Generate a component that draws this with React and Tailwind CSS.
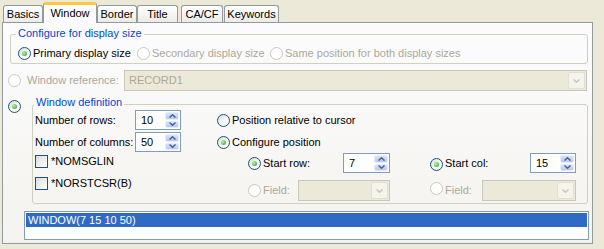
import React from 'react';

const Radio = ({ checked, disabled }) => (
  <span
    className={`inline-flex h-[13px] w-[13px] shrink-0 items-center justify-center rounded-full border ${
      disabled
        ? 'border-[#CAC8BB] bg-white'
        : 'border-[#1C5180] bg-gradient-to-br from-[#DCDBD5] via-[#F6F6F3] to-white'
    }`}
  >
    {checked && (
      <span className="h-[5px] w-[5px] rounded-full bg-[radial-gradient(circle_at_35%_35%,#B8F0B0,#21A121)]" />
    )}
  </span>
);

const Checkbox = () => (
  <span className="inline-block h-[13px] w-[13px] shrink-0 border border-[#1C5180] bg-gradient-to-br from-[#DCDCD7] to-white" />
);

const Arrow = ({ up, color = '#4D6185' }) => (
  <svg width="7" height="4" viewBox="0 0 7 4">
    <path
      d={up ? 'M0.5 3.5 L3.5 0.8 L6.5 3.5' : 'M0.5 0.5 L3.5 3.2 L6.5 0.5'}
      fill="none"
      stroke={color}
      strokeWidth="1.5"
    />
  </svg>
);

const Spinner = ({ value, w }) => (
  <div className={`flex h-[20px] shrink-0 border border-[#7F9DB9] bg-white ${w}`}>
    <span className="flex-1 pl-[5px] leading-[18px]">{value}</span>
    <div className="flex w-[16px] flex-col gap-px p-px">
      <span className="flex flex-1 items-center justify-center rounded-[2px] border border-[#E4ECFD] bg-gradient-to-b from-[#D9E4FD] to-[#B4C8F6]">
        <Arrow up />
      </span>
      <span className="flex flex-1 items-center justify-center rounded-[2px] border border-[#E4ECFD] bg-gradient-to-b from-[#D9E4FD] to-[#B4C8F6]">
        <Arrow />
      </span>
    </div>
  </div>
);

const Combo = ({ text, w }) => (
  <div className={`flex h-[21px] shrink-0 border border-[#C9C7BA] bg-[#ECE9D8] p-px ${w}`}>
    <span className="flex-1 pl-[3px] leading-[17px] text-[#ACA899]">{text}</span>
    <span className="flex w-[17px] items-center justify-center rounded-[2px] border border-[#E2E0D4] bg-[#F4F3EC]">
      <Arrow color="#C9C7BA" />
    </span>
  </div>
);

const Tab = ({ label, w, ml = '' }) => (
  <div
    className={`flex h-[17px] items-center justify-center rounded-t-[3px] border border-b-0 border-[#919B9C] bg-gradient-to-b from-white to-[#ECEBE6] ${w} ${ml}`}
  >
    {label}
  </div>
);

export default function App() {
  return (
    <div className="h-[249px] w-[604px] overflow-hidden bg-[#ECE9D8] font-['Liberation_Sans',Arial,sans-serif] text-[11px] text-black">
      {/* Tabs */}
      <div className="relative z-10 flex h-[22px] items-end pl-[3px]">
        <Tab label="Basics" w="w-[40px]" />
        <div className="-mb-px flex h-[21px] w-[54px] items-center justify-center rounded-t-[3px] border-x border-t-[3px] border-x-[#919B9C] border-t-[#FFC83C] bg-[#FCFCFE] pb-px">
          Window
        </div>
        <Tab label="Border" w="w-[40px]" />
        <Tab label="Title" w="w-[41px]" />
        <Tab label="CA/CF" w="w-[42px]" ml="ml-[3px]" />
        <Tab label="Keywords" w="w-[55px]" ml="ml-[1px]" />
      </div>

      {/* Panel */}
      <div className="ml-[2px] flex h-[222px] w-[591px] flex-col border border-[#919B9C] bg-gradient-to-b from-[#FCFCFE] to-[#F4F3EE]">
        {/* Configure for display size */}
        <div className="relative ml-[7px] mt-[11px] h-[30px] w-[578px] shrink-0 rounded-[3px] border border-[#D0D0BF]">
          <span className="absolute left-[5px] top-[-8px] bg-[#FCFCFD] px-[2px] leading-[13px] text-[#0046D5]">
            Configure for display size
          </span>
          <div className="flex items-center pl-[7px] pt-[10px]">
            <div className="flex w-[119px] items-center">
              <Radio checked />
              <span className="ml-[2px]">Primary display size</span>
            </div>
            <div className="flex w-[133px] items-center text-[#ACA899]">
              <Radio disabled />
              <span className="ml-[2px]">Secondary display size</span>
            </div>
            <div className="flex items-center text-[#ACA899]">
              <Radio disabled />
              <span className="ml-[2px]">Same position for both display sizes</span>
            </div>
          </div>
        </div>

        {/* Window reference */}
        <div className="mt-[6px] flex h-[21px] items-center pl-[5px]">
          <Radio disabled />
          <span className="ml-[6px] w-[97px] text-[#ACA899]">Window reference:</span>
          <Combo text="RECORD1" w="w-[463px]" />
        </div>

        {/* Window definition */}
        <div className="mt-[13px] flex items-start pl-[5px]">
          <div className="mt-[-7px]">
            <Radio checked />
          </div>
          <div className="relative ml-[11px] flex h-[100px] w-[556px] rounded-[3px] border border-[#D0D0BF]">
            <span className="absolute left-[1px] top-[-9px] bg-[#FAFAF9] px-[2px] leading-[13px] text-[#0046D5]">
              Window definition
            </span>

            <div className="w-[184px] pl-[2px] pt-[5px]">
              <div className="flex h-[20px] items-center">
                <span className="w-[100px]">Number of rows:</span>
                <Spinner value="10" w="w-[46px]" />
              </div>
              <div className="mt-[2px] flex h-[20px] items-center">
                <span className="w-[100px]">Number of columns:</span>
                <Spinner value="50" w="w-[46px]" />
              </div>
              <div className="mt-[3px] flex h-[13px] items-center">
                <Checkbox />
                <span className="ml-[3px]">*NOMSGLIN</span>
              </div>
              <div className="mt-[9px] flex h-[13px] items-center">
                <Checkbox />
                <span className="ml-[3px]">*NORSTCSR(B)</span>
              </div>
            </div>

            <div className="flex-1 pt-[5px]">
              <div className="flex h-[20px] items-center">
                <Radio />
                <span className="ml-[2px]">Position relative to cursor</span>
              </div>
              <div className="mt-[2px] flex h-[20px] items-center">
                <Radio checked />
                <span className="ml-[2px]">Configure position</span>
              </div>
              <div className="mt-[1px] flex h-[20px] items-center pl-[31px]">
                <Radio checked />
                <span className="ml-[2px] w-[80px]">Start row:</span>
                <Spinner value="7" w="w-[47px]" />
                <span className="ml-[40px]">
                  <Radio checked />
                </span>
                <span className="ml-[2px] w-[85px]">Start col:</span>
                <Spinner value="15" w="w-[46px]" />
              </div>
              <div className="mt-[7px] flex h-[21px] items-center pl-[31px] text-[#ACA899]">
                <Radio disabled />
                <span className="ml-[2px] w-[35px]">Field:</span>
                <Combo text="" w="w-[92px]" />
                <span className="ml-[40px]">
                  <Radio disabled />
                </span>
                <span className="ml-[2px] w-[37px]">Field:</span>
                <Combo text="" w="w-[94px]" />
              </div>
            </div>
          </div>
        </div>

        {/* Result list */}
        <div className="ml-[21px] mt-[7px] h-[29px] w-[565px] border border-[#7F9DB9] bg-white p-px">
          <div className="h-[14px] bg-[#316AC5] pl-[2px] leading-[14px] text-white">WINDOW(7 15 10 50)</div>
        </div>
      </div>
    </div>
  );
}
